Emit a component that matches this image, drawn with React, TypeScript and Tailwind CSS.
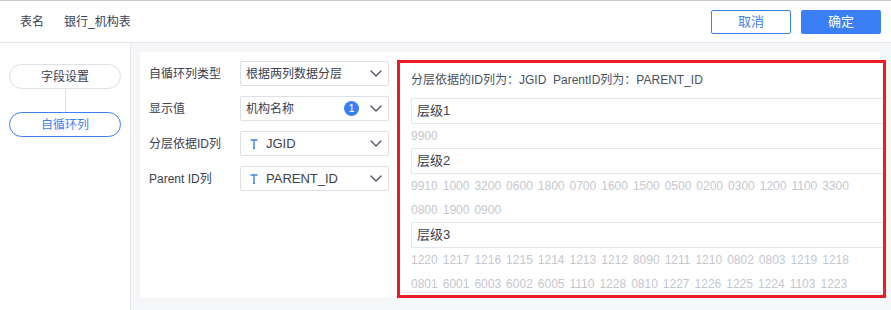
const levels = [
  { name: "层级1", ids: ["9900"] },
  {
    name: "层级2",
    ids: "9910 1000 3200 0600 1800 0700 1600 1500 0500 0200 0300 1200 1100 3300 0800 1900 0900".split(" "),
  },
  {
    name: "层级3",
    ids: "1220 1217 1216 1215 1214 1213 1212 8090 1211 1210 0802 0803 1219 1218 0801 6001 6003 6002 6005 1110 1228 0810 1227 1226 1225 1224 1103 1223".split(" "),
  },
];

function Chevron() {
  return (
    <svg width="12" height="7" viewBox="0 0 12 7" fill="none" className="ml-auto shrink-0">
      <path d="M1 1l5 5 5-5" stroke="#4b5060" strokeWidth="1.3" strokeLinecap="round" strokeLinejoin="round" />
    </svg>
  );
}

function TypeIcon() {
  return (
    <svg width="8" height="10" viewBox="0 0 8 10" fill="none" className="ml-[4px] mr-[8px] shrink-0">
      <path d="M0.5 1H7.5M4 1V9.5M3 9.5H5" stroke="#3d82f2" strokeWidth="1.4" />
    </svg>
  );
}

function Field({ label, children }: { label: string; children: React.ReactNode }) {
  return (
    <div className="flex items-center">
      <div className="w-[91px] text-[12px] text-[#3c4150]">{label}</div>
      <div className="flex h-[25px] w-[149px] items-center rounded-[2px] border border-[#dcdfe6] bg-white pl-[5px] pr-[6px] text-[12px] text-[#3c4150]">
        {children}
      </div>
    </div>
  );
}

export default function App() {
  return (
    <div
      className="flex h-[310px] w-[891px] flex-col overflow-hidden bg-[#f5f6f8]"
      style={{ fontFamily: '"Liberation Sans", "Noto Sans CJK SC", sans-serif' }}
    >
      <header className="flex h-[43px] shrink-0 items-center border-t border-b border-t-[#cacaca] border-b-[#e6e8eb] bg-white pl-[20px] pr-[10px] text-[12px] text-[#3c4150]">
        <span>表名</span>
        <span className="ml-[20px]">银行_机构表</span>
        <button className="ml-auto h-[24px] w-[80px] rounded-[2px] border border-[#3d82f2] bg-white text-[13px] text-[#3d82f2]">
          取消
        </button>
        <button className="ml-[10px] h-[24px] w-[80px] rounded-[2px] bg-[#3a80f4] text-[13px] text-white">
          确定
        </button>
      </header>

      <div className="flex flex-1">
        <aside className="flex w-[131px] shrink-0 flex-col items-center border-r border-[#e6e8eb] bg-white pt-[21px] text-[12px]">
          <div className="flex h-[25px] w-[112px] items-center justify-center rounded-full border border-[#dcdfe6] text-[#3c4150]">
            字段设置
          </div>
          <div className="h-[23px] w-px bg-[#dcdfe6]" />
          <div className="flex h-[25px] w-[112px] items-center justify-center rounded-full border border-[#3d82f2] text-[#3d82f2]">
            自循环列
          </div>
        </aside>

        <div className="pl-[9px] pt-[9px]">
          <div className="flex h-[246px] w-[740px] bg-white">
            <div className="flex w-[257px] shrink-0 flex-col gap-[10px] pl-[9px] pt-[9px]">
              <Field label="自循环列类型">
                <span>根据两列数据分层</span>
                <Chevron />
              </Field>
              <Field label="显示值">
                <span>机构名称</span>
                <span className="ml-auto flex h-[15px] w-[15px] items-center justify-center rounded-full bg-[#3a80f4] text-[11px] text-white">
                  1
                </span>
                <span className="ml-[11px]">
                  <Chevron />
                </span>
              </Field>
              <Field label="分层依据ID列">
                <TypeIcon />
                <span className="text-[13px]">JGID</span>
                <Chevron />
              </Field>
              <Field label="Parent ID列">
                <TypeIcon />
                <span className="text-[13px]">PARENT_ID</span>
                <Chevron />
              </Field>
            </div>

            <div className="-mr-[6px] mt-[8px] h-[238px] w-[489px] shrink-0 border-[3px] border-[#ed1c24] bg-white">
              <div className="h-[230px] overflow-hidden border-b border-[#e6e8eb] pl-[11px]">
                <div className="whitespace-pre pt-[7px] text-[12px] leading-[20px] text-[#4a5163]">
                  分层依据的ID列为：JGID  ParentID列为：PARENT_ID
                </div>
                <div className="mt-[8px]">
                  {levels.map((lv) => (
                    <div key={lv.name}>
                      <div className="flex h-[26px] items-center border border-r-0 border-[#e4e7ed] pl-[5px] text-[13px] text-[#3c4150]">
                        {lv.name}
                      </div>
                      <div className="flex flex-wrap gap-x-[5px] pr-[11px] text-[12px] leading-[24px] text-[#c4c7cf]">
                        {lv.ids.map((id, i) => (
                          <span key={i}>{id}</span>
                        ))}
                      </div>
                    </div>
                  ))}
                </div>
              </div>
            </div>
          </div>
        </div>
      </div>
    </div>
  );
}
